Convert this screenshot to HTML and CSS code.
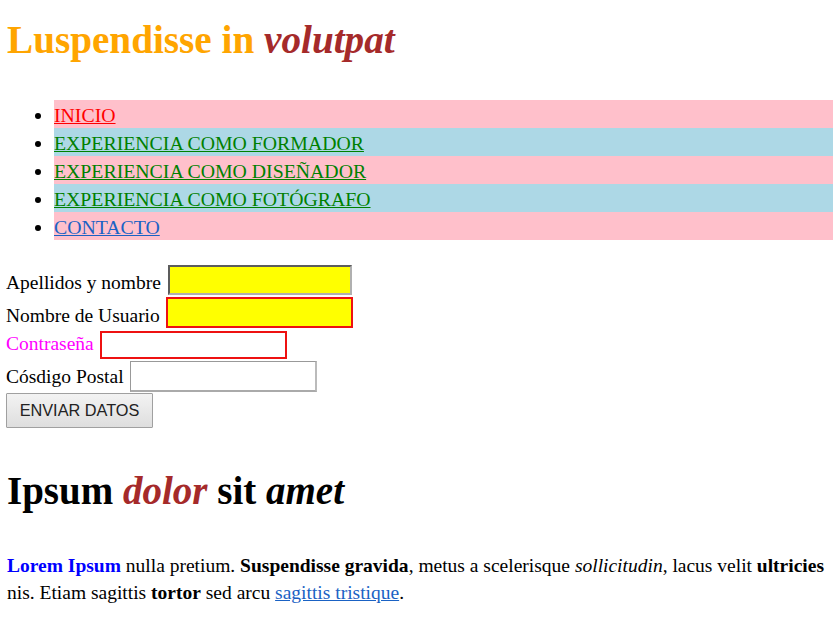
FILE: index.html
```html
<!DOCTYPE html>
<html lang="es">
<head>
<meta charset="utf-8">
<title>Luspendisse in volutpat</title>
<link rel="stylesheet" href="styles.css">
</head>
<body>
<h1 class="title">Luspendisse in <em class="accent">volutpat</em></h1>
<ul class="nav">
  <li class="nav-item pink"><a class="link red" href="#">INICIO</a></li>
  <li class="nav-item blue"><a class="link green" href="#">EXPERIENCIA COMO FORMADOR</a></li>
  <li class="nav-item pink"><a class="link green" href="#">EXPERIENCIA COMO DISEÑADOR</a></li>
  <li class="nav-item blue"><a class="link green" href="#">EXPERIENCIA COMO FOTÓGRAFO</a></li>
  <li class="nav-item pink"><a class="link navy" href="#">CONTACTO</a></li>
</ul>
<form class="form">
  <div class="row row-1"><label class="label low">Apellidos y nombre</label><input class="field field-inset" type="text"></div>
  <div class="row row-2"><label class="label low">Nombre de Usuario</label><input class="field field-red field-yellow" type="text"></div>
  <div class="row row-3"><label class="label label-pink high">Contraseña</label><input class="field field-red field-short" type="password"></div>
  <div class="row row-4"><label class="label high">Cósdigo Postal</label><input class="field field-plain" type="text"></div>
  <button class="submit" type="button">ENVIAR DATOS</button>
</form>
<h2 class="subtitle">Ipsum <em class="accent">dolor</em> sit <em>amet</em></h2>
<p class="text"><strong class="blue-strong">Lorem Ipsum</strong> nulla pretium. <strong>Suspendisse gravida</strong>, metus a scelerisque <em>sollicitudin</em>, lacus velit <strong>ultricies</strong> nis. Etiam sagittis <strong>tortor</strong> sed arcu <a class="link navy" href="#">sagittis tristique</a>.</p>
</body>
</html>
```
FILE: styles.css
```css
html, body {
  background: #ffffff;
}
body {
  margin: 0 4px 0 6px;
  font-family: "Liberation Serif", "Times New Roman", serif;
  font-size: 19.5px;
  color: #000;
}
.title {
  margin: 17px 0 0 1px;
  font-size: 39.2px;
  line-height: 45px;
  font-weight: bold;
  color: #ffa500;
}
.accent {
  color: #a52a2a;
}
.nav {
  list-style: disc;
  margin: 38px 0 0 0;
  padding-left: 48px;
}
.nav-item {
  height: 28px;
  line-height: 30px;
  font-size: 19.8px;
}
.pink { background: #ffc0cb; }
.blue { background: #add8e6; }
.link { text-decoration: underline; }
.red { color: #ff0000; }
.green { color: #008000; }
.navy { color: #1a62c4; }

.form {
  margin-top: 25px;
  display: flex;
  flex-direction: column;
  align-items: flex-start;
}
.row {
  display: flex;
  align-items: flex-end;
  gap: 6px;
}
.row-2 { margin-top: 2px; }
.row-3 { margin-top: 3px; }
.row-4 { margin-top: 2px; }
.label {
  line-height: 22px;
}
.label.low { margin-bottom: 1px; }
.label.high { margin-bottom: 4px; }
.label-pink { color: #ff00ff; }
.row-1 .field { margin-left: 1px; }
.field {
  box-sizing: border-box;
  width: 187px;
  height: 31px;
  margin: 0;
  padding: 0 4px;
  font-family: "Liberation Sans", Arial, sans-serif;
  font-size: 16px;
  background: #fff;
}
.field-inset {
  width: 184px;
  height: 30px;
  background: #ffff00;
  border: 2px inset #b0b0b0;
}
.field-red {
  border: 2px solid #ee1111;
}
.field-yellow {
  background: #ffff00;
}
.field-short {
  height: 28px;
}
.field-plain {
  border-style: solid;
  border-width: 1px 2px 2px 1px;
  border-color: #999 #bbb #aaa #999;
}
.submit {
  margin-top: 1px;
  box-sizing: border-box;
  width: 147px;
  height: 35px;
  padding: 0;
  font-family: "Liberation Sans", Arial, sans-serif;
  font-size: 16.3px;
  color: #222;
  border: 1px solid #a0a0a0;
  border-radius: 1px;
  background: linear-gradient(#f3f3f3, #dedede);
}
.subtitle {
  margin: 40px 0 0 1px;
  font-size: 39px;
  line-height: 45px;
  font-weight: bold;
}
.text {
  margin: 39px 0 0 1px;
  line-height: 27px;
}
.blue-strong {
  color: #0000ff;
}
```
